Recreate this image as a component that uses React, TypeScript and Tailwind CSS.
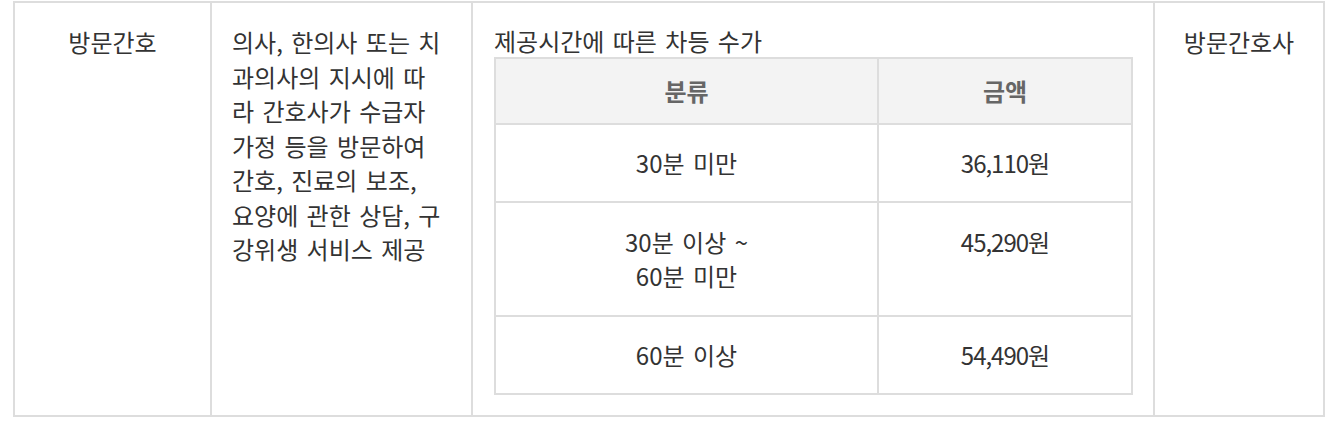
const description = [
  '의사, 한의사 또는 치',
  '과의사의 지시에 따',
  '라 간호사가 수급자',
  '가정 등을 방문하여',
  '간호, 진료의 보조,',
  '요양에 관한 상담, 구',
  '강위생 서비스 제공',
];

const fees = [
  { time: ['30분 미만'], price: '36,110원', tall: false },
  { time: ['30분 이상 ~', '60분 미만'], price: '45,290원', tall: true },
  { time: ['60분 이상'], price: '54,490원', tall: false },
];

export default function App() {
  return (
    <div className="bg-white pl-[13px] pt-[1px] pb-[4px] font-['Noto_Sans_CJK_KR',sans-serif] text-[24px] text-[#333] [word-spacing:3px]">
      <div className="flex w-[1312px] border-2 border-[#ddd]">
        {/* 구분 */}
        <div className="w-[197px] shrink-0 border-r-2 border-[#ddd] pt-[22px] text-center leading-[34.5px]">
          방문간호
        </div>

        {/* 내용 */}
        <div className="w-[261px] shrink-0 border-r-2 border-[#ddd] pt-[22px] pl-[20px] leading-[34.5px] whitespace-nowrap">
          {description.map((line, i) => (
            <div key={i}>{line}</div>
          ))}
        </div>

        {/* 수가 */}
        <div className="w-[682px] shrink-0 border-r-2 border-[#ddd] pt-[22px] pr-[20px] pb-[20px] pl-[21px]">
          <p className="leading-[32px]">제공시간에 따른 차등 수가</p>
          <div className="grid w-[639px] grid-cols-[383px_252px] border-2 border-[#ddd] text-center">
            <div className="border-r-2 border-b-2 border-[#ddd] bg-[#f3f3f3] py-[15px] leading-[34px] font-bold text-[#666]">
              분류
            </div>
            <div className="border-b-2 border-[#ddd] bg-[#f3f3f3] py-[15px] leading-[34px] font-bold text-[#666]">
              금액
            </div>
            {fees.map((row, i) => {
              const last = i === fees.length - 1;
              const pad = row.tall ? 'py-[22px]' : 'py-[21px]';
              return [
                <div
                  key={`t${i}`}
                  className={`border-r-2 border-[#ddd] ${pad} leading-[34px] ${last ? '' : 'border-b-2'}`}
                >
                  {row.time.map((t, j) => (
                    <div key={j}>{t}</div>
                  ))}
                </div>,
                <div
                  key={`p${i}`}
                  className={`border-[#ddd] ${pad} leading-[34px] tracking-[-1px] ${last ? '' : 'border-b-2'}`}
                >
                  {row.price}
                </div>,
              ];
            })}
          </div>
        </div>

        {/* 인력 */}
        <div className="flex-1 pt-[22px] text-center leading-[34.5px]">방문간호사</div>
      </div>
    </div>
  );
}
